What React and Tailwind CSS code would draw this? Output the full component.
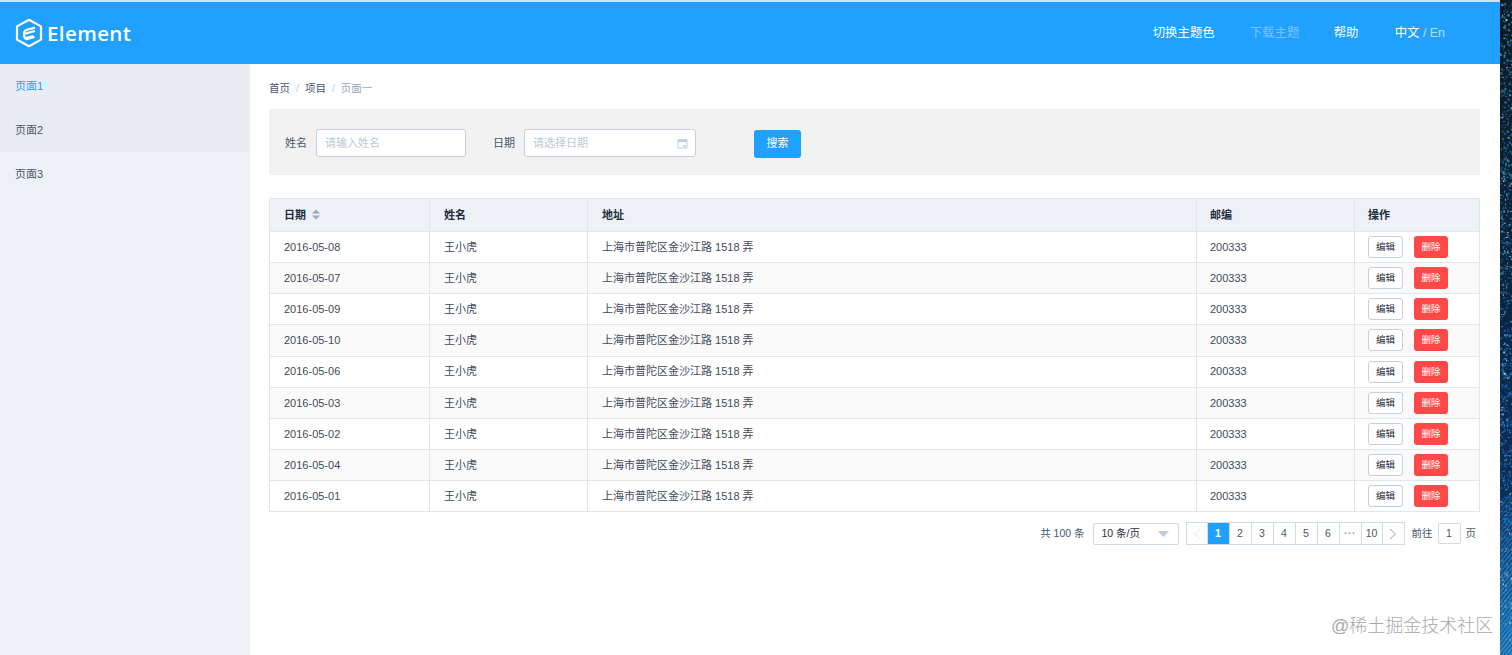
import React from "react";

const FONT = '"Liberation Sans", "Noto Sans CJK SC", sans-serif';

const rows = ["2016-05-08","2016-05-07","2016-05-09","2016-05-10","2016-05-06","2016-05-03","2016-05-02","2016-05-04","2016-05-01"];
const cols = ["w-[160px]","w-[158px]","w-[609px]","w-[158px]","flex-1"];

function Speckle() {
  const dots = [];
  let s = 12345;
  const r = () => { s = (s * 16807) % 2147483647; return s / 2147483647; };
  for (let i = 0; i < 1000; i++) {
    const y = r() * 655;
    const bright = r() < 0.22;
    const base = y > 300 ? "#1f78d0" : "#2a7fa8";
    dots.push(<rect key={i} x={r() * 12} y={y} width={r() < 0.4 ? 2 : 1} height={r() < 0.4 ? 2 : 1} fill={bright ? "#8fd0ee" : base} opacity={0.4 + r() * 0.6} />);
  }
  const lines = [];
  for (let i = 0; i < 34; i++) {
    const y = 500 + i * 5;
    lines.push(<line key={i} x1={-2} y1={y + 10} x2={14} y2={y - 10} stroke="#3a96d4" strokeWidth="1.2" opacity={0.3 + i * 0.02} />);
  }
  return (
    <svg width="12" height="655" viewBox="0 0 12 655" className="block">
      <defs>
        <linearGradient id="sky" x1="0" y1="0" x2="0" y2="1">
          <stop offset="0" stopColor="#0b1a24" />
          <stop offset="0.45" stopColor="#0a2440" />
          <stop offset="0.75" stopColor="#0c2f58" />
          <stop offset="1" stopColor="#1a6aa8" />
        </linearGradient>
      </defs>
      <rect width="12" height="655" fill="url(#sky)" />
      {lines}
      {dots}
    </svg>
  );
}

function Logo() {
  return (
    <div className="flex items-center gap-[4px] text-white">
      <svg width="28" height="30" viewBox="0 0 28 30" fill="none" stroke="#fff" strokeLinejoin="round">
        <path d="M14 1.8 L26 8.4 V21.6 L14 28.2 L2 21.6 V8.4 Z" strokeWidth="2.2" />
        <path d="M20 9.6 L12 11.8 C9.6 12.5 9 14.2 9 16 C9 18 9.4 19.4 10 20.4 L18.5 18" strokeWidth="2.2" />
        <path d="M10 15.6 L20 13 M10.5 21.4 L19.5 19" strokeWidth="2.2" />
      </svg>
      <span className="text-[20.5px] leading-none font-semibold tracking-[0.4px]" style={{ fontFamily: '"Open Sans", sans-serif' }}>Element</span>
    </div>
  );
}

function Header() {
  return (
    <header className="h-[62px] bg-[#20a0ff] flex items-center justify-between pl-[15px] pr-[55px] text-white">
      <Logo />
      <nav className="flex items-center text-[12.4px]">
        <span className="w-[97px]">切换主题色</span>
        <span className="w-[84px] text-white/40">下载主题</span>
        <span className="w-[61px]">帮助</span>
        <span>中文 <span className="text-white/70">/ En</span></span>
      </nav>
    </header>
  );
}

function Sidebar() {
  return (
    <aside className="w-[250px] shrink-0 bg-[#eef1f6] text-[11px] text-[#48576a]">
      <div className="h-[44px] pl-[15px] flex items-center text-[#20a0ff] bg-[#e9edf3]">页面1</div>
      <div className="h-[44px] pl-[15px] flex items-center bg-[#e9edf3]">页面2</div>
      <div className="h-[44px] pl-[15px] flex items-center">页面3</div>
    </aside>
  );
}

function Calendar() {
  return (
    <svg width="11" height="11" viewBox="0 0 11 11" fill="none" className="text-[#bfcbd9]">
      <path d="M1 2h9v8H1z" stroke="currentColor" />
      <path d="M1 1.5h9v2.5H1z" fill="currentColor" />
      <path d="M6.5 7h2v2h-2z" fill="currentColor" />
    </svg>
  );
}

function Filter() {
  return (
    <div className="mt-[13px] h-[66px] bg-[#f2f2f2] flex items-center pl-[16px] pt-[2px] text-[11px] text-[#48576a]">
      <span className="w-[31px]">姓名</span>
      <div className="w-[150px] h-[28px] bg-white border border-[#c6cfdb] rounded-[3px] flex items-center pl-[8px] text-[#c0c8d2]">请输入姓名</div>
      <span className="ml-[27px] w-[31px]">日期</span>
      <div className="w-[172px] h-[28px] bg-white border border-[#c6cfdb] rounded-[3px] flex items-center justify-between pl-[8px] pr-[7px] text-[#c0c8d2]">
        <span>请选择日期</span>
        <Calendar />
      </div>
      <button className="ml-[58px] mt-[1px] w-[47px] h-[28px] bg-[#20a0ff] rounded-[3px] text-white text-[11px]">搜索</button>
    </div>
  );
}

function Cell({ i, children, last }) {
  const pad = i >= 3 ? "pl-[13px]" : "pl-[14px]";
  return (
    <div className={`${cols[i]} flex items-center ${pad} ${last ? "" : "border-r border-[#dfe6ec]"}`}>{children}</div>
  );
}

function Table() {
  return (
    <div className="mt-[23px] border border-[#dfe6ec] border-b-0 text-[11px] text-[#3f4a5a]">
      <div className="h-[31.8px] flex bg-[#eef1f6] font-bold text-[#1f2d3d] border-b border-[#dfe6ec] box-content">
        <Cell i={0}>
          <span>日期</span>
          <svg width="8" height="11" viewBox="0 0 8 11" className="ml-[6px]">
            <path d="M4 0.5 L8 4.5 H0 Z" fill="#97a8be" />
            <path d="M4 10.5 L0 6.5 H8 Z" fill="#97a8be" />
          </svg>
        </Cell>
        <Cell i={1}>姓名</Cell>
        <Cell i={2}>地址</Cell>
        <Cell i={3}>邮编</Cell>
        <Cell i={4} last>操作</Cell>
      </div>
      {rows.map((d, idx) => (
        <div key={d} className={`h-[31.2px] flex border-b border-[#dfe6ec] ${idx % 2 ? "bg-[#fafafa]" : "bg-white"}`}>
          <Cell i={0}>{d}</Cell>
          <Cell i={1}>王小虎</Cell>
          <Cell i={2}>上海市普陀区金沙江路 1518 弄</Cell>
          <Cell i={3}>200333</Cell>
          <Cell i={4} last>
            <button className="w-[35px] h-[22px] bg-white border border-[#c6cfdb] rounded-[3px] text-[9.5px] text-[#1f2d3d]">编辑</button>
            <button className="ml-[11px] w-[34px] h-[22px] bg-[#ff4949] rounded-[3px] text-[9.5px] text-white">删除</button>
          </Cell>
        </div>
      ))}
    </div>
  );
}

function Page({ children, active, w = "w-[22px]" }) {
  return (
    <div className={`${w} flex items-center justify-center border-r border-[#d1dbe5] ${active ? "bg-[#20a0ff] text-white font-bold" : "bg-white"}`}>{children}</div>
  );
}

function Chevron({ dir, color }) {
  return (
    <svg width="8" height="12" viewBox="0 0 8 12" fill="none" stroke={color} strokeWidth="1">
      <path d={dir === "l" ? "M7 1 L1.5 6 L7 11" : "M1 1 L6.5 6 L1 11"} />
    </svg>
  );
}

function Pagination() {
  return (
    <div className="mt-[10px] pr-[4px] flex justify-end items-center text-[10.5px] text-[#48576a]">
      <span>共 100 条</span>
      <div className="ml-[8px] w-[86px] h-[22px] border border-[#d1dbe5] rounded-[2px] flex items-center justify-between pl-[8px] pr-[9px] text-[#1f2d3d]">
        <span>10 条/页</span>
        <svg width="11" height="6" viewBox="0 0 11 6"><path d="M0 0 H11 L5.5 6 Z" fill="#bfcbd9" /></svg>
      </div>
      <div className="ml-[7px] flex border border-[#d1dbe5] border-r-0 box-content h-[21px] items-stretch">
        <div className="w-[21px] flex items-center justify-center border-r border-[#d1dbe5]"><Chevron dir="l" color="#e4e8ee" /></div>
        <Page active>1</Page>
        <Page>2</Page>
        <Page>3</Page>
        <Page>4</Page>
        <Page>5</Page>
        <Page>6</Page>
        <Page><span className="tracking-[0.5px] text-[#97a8be] font-bold">···</span></Page>
        <Page w="w-[21px]">10</Page>
        <div className="w-[22px] flex items-center justify-center border-r border-[#d1dbe5]"><Chevron dir="r" color="#97a8be" /></div>
      </div>
      <span className="ml-[7px]">前往</span>
      <div className="ml-[5px] w-[23px] h-[21px] border border-[#d1dbe5] rounded-[2px] flex items-center justify-center">1</div>
      <span className="ml-[5px]">页</span>
    </div>
  );
}

export default function App() {
  return (
    <div className="relative w-[1512px] h-[655px] overflow-hidden bg-white flex" style={{ fontFamily: FONT }}>
      <div className="w-[1500px] shrink-0 flex flex-col">
        <div className="h-[2px] bg-[#cfe3f2]" />
        <Header />
        <div className="flex flex-1">
          <Sidebar />
          <main className="flex-1 pl-[19px] pr-[20px] pt-[18px]">
            <div className="h-[14px] flex items-center text-[10.5px] text-[#48576a]">
              <span>首页</span>
              <span className="mx-[6px] text-[#bfcbd9]">/</span>
              <span>项目</span>
              <span className="mx-[6px] text-[#bfcbd9]">/</span>
              <span className="text-[#97a8be]">页面一</span>
            </div>
            <Filter />
            <Table />
            <Pagination />
          </main>
        </div>
      </div>
      <Speckle />
      <div className="absolute left-[1331px] top-[613px] text-[18px] leading-[26px] font-light text-[#a8a8a8]">@稀土掘金技术社区</div>
    </div>
  );
}
